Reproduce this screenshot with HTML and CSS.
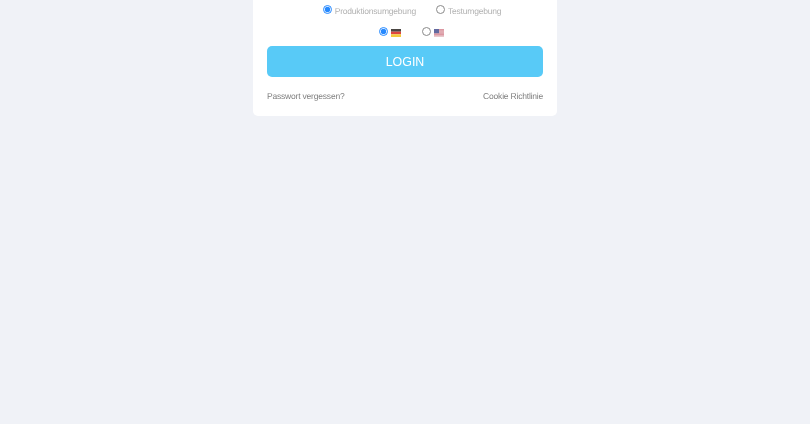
FILE: index.html
```html
<!DOCTYPE html>
<html lang="de">
<head>
<meta charset="utf-8">
<title>Login</title>
<link rel="stylesheet" href="styles.css">
</head>
<body>
<main class="card">
  <form class="form">
    <div class="env-row">
      <label class="opt"><input class="radio" type="radio" name="env" checked><span>Produktionsumgebung</span></label>
      <label class="opt"><input class="radio" type="radio" name="env"><span>Testumgebung</span></label>
    </div>
    <div class="lang-row">
      <label class="opt"><input class="radio" type="radio" name="lang" checked>
        <svg class="flag" viewBox="0 0 10 8" aria-label="Deutsch"><rect width="10" height="2.7" fill="#2b2623"/><rect y="2.7" width="10" height="2.6" fill="#d8261c"/><rect y="5.3" width="10" height="2.7" fill="#f2c21a"/></svg>
      </label>
      <label class="opt"><input class="radio" type="radio" name="lang">
        <svg class="flag" viewBox="0 0 10 8" aria-label="English"><rect width="10" height="8" fill="#eee"/><path d="M0 .6h10M0 1.8h10M0 3h10M0 4.2h10M0 5.4h10M0 6.9h10" stroke="#c9485a" stroke-width=".7"/><rect width="5" height="4.2" fill="#47508f"/></svg>
      </label>
    </div>
    <button class="login" type="button">LOGIN</button>
    <div class="links">
      <a href="#">Passwort vergessen?</a>
      <a href="#">Cookie Richtlinie</a>
    </div>
  </form>
</main>
</body>
</html>
```
FILE: styles.css
```css
html, body {
  margin: 0;
  padding: 0;
  height: 100%;
}
body {
  background: #f0f2f7;
  font-family: "Liberation Sans", Arial, sans-serif;
  font-size: 8.5px;
  letter-spacing: -0.2px;
  color: #777;
  text-rendering: geometricPrecision;
}
.card {
  width: 304px;
  height: 116px;
  margin: 0 auto;
  background: #fff;
  border-radius: 0 0 5px 5px;
  box-sizing: border-box;
  padding: 0 14px;
  filter: blur(0.5px);
}
.form {
  display: flex;
  flex-direction: column;
}
.env-row {
  display: flex;
  justify-content: center;
  gap: 20px;
  height: 22px;
  padding: 5px 0 0 14px;
  box-sizing: border-box;
  color: #b2b2b2;
}
.lang-row {
  display: flex;
  justify-content: center;
  gap: 21px;
  height: 24px;
  padding: 5px 0 0 13px;
  box-sizing: border-box;
}
.opt {
  display: flex;
  align-items: flex-start;
  gap: 3px;
  height: 12px;
}
.opt span {
  line-height: 11px;
  padding-top: 1px;
}
.radio {
  width: 9px;
  height: 9px;
  margin: 0;
  opacity: 0.85;
}
.flag {
  width: 10px;
  height: 8px;
  margin-top: 2px;
  opacity: 0.85;
}
.login {
  height: 31px;
  border: 0;
  border-radius: 5px;
  background: #58caf7;
  color: #fff;
  font-family: inherit;
  font-size: 12.4px;
  letter-spacing: 0;
  padding: 0;
}
.links {
  display: flex;
  justify-content: space-between;
  margin-top: 14px;
  line-height: 11px;
}
.links a {
  color: #808080;
  text-decoration: none;
}
```
